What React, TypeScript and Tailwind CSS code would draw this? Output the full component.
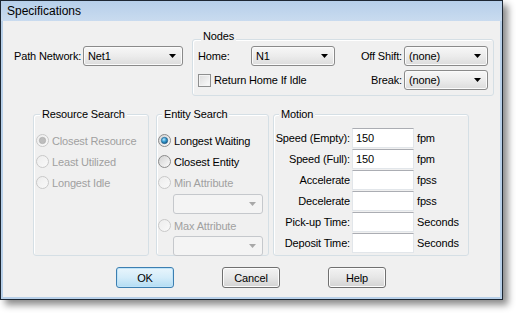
import React from "react";

const font = { fontFamily: '"Liberation Sans", Arial, sans-serif' };

function Arrow({ disabled }: { disabled?: boolean }) {
  return (
    <svg width="7" height="4" viewBox="0 0 7 4" className="ml-auto mr-[6px] shrink-0">
      <path d="M0 0 H7 L3.5 4 Z" fill={disabled ? "#a8a8a8" : "#000"} />
    </svg>
  );
}

function Combo({ text, w, disabled }: { text?: string; w: string; disabled?: boolean }) {
  return (
    <div
      className={
        w +
        " h-[20px] shrink-0 rounded-[3px] border flex items-center pl-[4px] " +
        (disabled
          ? "border-[#c5c8cc] bg-[#f4f4f4]"
          : "border-[#8a8a8a] bg-gradient-to-b from-[#f7f7f7] via-[#ececec] to-[#dcdcdc] shadow-[inset_0_0_0_1px_#fbfbfb]")
      }
    >
      <span className="text-black">{text}</span>
      <Arrow disabled={disabled} />
    </div>
  );
}

function Radio({ state, id }: { state: "blue" | "gray" | "off" | "dis"; id: string }) {
  const dis = state === "dis" || state === "gray";
  return (
    <svg width="13" height="13" viewBox="0 0 13 13" className="shrink-0">
      <defs>
        <linearGradient id={id + "f"} x1="0" y1="0" x2="1" y2="1">
          <stop offset="0" stopColor={dis ? "#ececec" : "#d0d0d0"} />
          <stop offset="1" stopColor={dis ? "#fafafa" : "#fdfdfd"} />
        </linearGradient>
        <radialGradient id={id + "d"} cx="0.4" cy="0.35" r="0.7">
          <stop offset="0" stopColor="#bfe6fb" />
          <stop offset="0.45" stopColor="#3aa0d4" />
          <stop offset="1" stopColor="#0d4f7c" />
        </radialGradient>
      </defs>
      <circle cx="6.5" cy="6.5" r="6" fill={`url(#${id}f)`} stroke={dis ? "#c8c8c8" : "#8b8b8b"} />
      {state === "blue" && <circle cx="6.5" cy="6.5" r="3.2" fill={`url(#${id}d)`} stroke="#1e5d8a" strokeWidth="0.6" />}
      {state === "gray" && <circle cx="6.5" cy="6.5" r="3.2" fill="#bdbdbd" stroke="#a9a9a9" strokeWidth="0.6" />}
    </svg>
  );
}

function RadioRow({ label, state, id, className = "" }: { label: string; state: "blue" | "gray" | "off" | "dis"; id: string; className?: string }) {
  const dis = state === "dis" || state === "gray";
  return (
    <div className={"flex items-center h-[21px] " + className}>
      <Radio state={state} id={id} />
      <span className={"ml-[3px] " + (dis ? "text-[#a0a0a0]" : "text-black")}>{label}</span>
    </div>
  );
}

function Group({ title, className, legend, children }: { title: string; className: string; legend: string; children?: React.ReactNode }) {
  return (
    <div className={"relative rounded-[3px] border border-[#d5dfe5] shadow-[inset_1px_1px_0_#fff] " + className}>
      <span className={"absolute px-[2px] bg-[#f0f0f0] leading-[14px] text-black " + legend}>{title}</span>
      {children}
    </div>
  );
}

function TextBox({ value }: { value?: string }) {
  return (
    <div className="w-[62px] h-[20px] shrink-0 bg-white border border-[#e2e6ea] border-t-[#abadb3] pl-[3px] flex items-center">
      {value}
    </div>
  );
}

function MotionRow({ label, value, unit }: { label: string; value?: string; unit: string }) {
  return (
    <div className="flex items-center h-[20px]">
      <span className="w-[77px] shrink-0 text-right pr-[2px] text-black">{label}</span>
      <TextBox value={value} />
      <span className="ml-[3px] text-black">{unit}</span>
    </div>
  );
}

function Button({ label, def }: { label: string; def?: boolean }) {
  return (
    <div
      className={
        "w-[58px] h-[21px] rounded-[3px] border flex items-center justify-center text-black " +
        (def
          ? "border-[#3c7fb1] bg-gradient-to-b from-[#e8f5fc] via-[#d4ecf9] to-[#b3dcf3] shadow-[inset_0_0_0_1px_#bfe3f8]"
          : "border-[#707070] bg-gradient-to-b from-[#f3f3f3] via-[#e6e6e6] to-[#d3d3d3] shadow-[inset_0_0_0_1px_#fcfcfc]")
      }
    >
      {label}
    </div>
  );
}

export default function App() {
  return (
    <div className="w-[517px] h-[316px] bg-white text-[11px] leading-[14px] whitespace-nowrap tracking-[-0.15px]" style={font}>
      <div className="w-[503px] h-[300px] border border-[#1d2733] bg-[#b8d0e9] shadow-[5px_5px_7px_rgba(0,0,0,0.45)] flex flex-col">
        <div className="h-[20px] shrink-0 bg-gradient-to-b from-[#b6cfea] to-[#c9dbef] flex items-center pl-[6px]">
          <span className="text-[12px] text-black tracking-normal">Specifications</span>
        </div>
        <div className="flex-1 mx-[2px] mb-[2px] bg-[#f0f0f0] flex flex-col">
          {/* Row 1 */}
          <div className="flex items-start mt-[18px] pl-[11px]">
            <div className="flex items-center mt-[7px]">
              <span className="w-[69px] text-black">Path Network:</span>
              <Combo text="Net1" w="w-[100px]" />
            </div>
            <Group title="Nodes" legend="left-[8px] -top-[11px]" className="ml-[9px] w-[302px] h-[57px] pt-[6px] px-[5px]">
              <div className="flex items-center">
                <span className="w-[53px] text-black">Home:</span>
                <Combo text="N1" w="w-[84px]" />
                <span className="ml-auto mr-[2px] text-black">Off Shift:</span>
                <Combo text="(none)" w="w-[84px]" />
              </div>
              <div className="flex items-center mt-[4px]">
                <div className="w-[13px] h-[13px] border border-[#8e8f8f] bg-gradient-to-br from-[#dcdcdc] to-[#fbfbfb] shadow-[inset_0_0_0_1px_#f4f4f4]" />
                <span className="ml-[3px] text-black">Return Home If Idle</span>
                <span className="ml-auto mr-[2px] text-black">Break:</span>
                <Combo text="(none)" w="w-[84px]" />
              </div>
            </Group>
          </div>
          {/* Row 2 */}
          <div className="flex mt-[18px] pl-[30px]">
            <Group title="Resource Search" legend="left-[6px] -top-[8px]" className="w-[116px] h-[142px] pt-[15px] pl-[2px]">
              <RadioRow label="Closest Resource" state="gray" id="r1" />
              <RadioRow label="Least Utilized" state="dis" id="r2" />
              <RadioRow label="Longest Idle" state="dis" id="r3" />
            </Group>
            <Group title="Entity Search" legend="left-[5px] -top-[8px]" className="ml-[7px] w-[113px] h-[142px] pt-[15px] pl-[1px]">
              <RadioRow label="Longest Waiting" state="blue" id="e1" />
              <RadioRow label="Closest Entity" state="off" id="e2" />
              <RadioRow label="Min Attribute" state="dis" id="e3" />
              <div className="pl-[15px] mt-[1px]">
                <Combo w="w-[90px]" disabled />
              </div>
              <RadioRow label="Max Attribute" state="dis" id="e4" className="mt-[1px]" />
              <div className="pl-[15px]">
                <Combo w="w-[90px]" disabled />
              </div>
            </Group>
            <Group title="Motion" legend="left-[5px] -top-[8px]" className="ml-[4px] w-[196px] h-[142px] pt-[13px] pl-[1px] flex flex-col gap-[1px]">
              <MotionRow label="Speed (Empty):" value="150" unit="fpm" />
              <MotionRow label="Speed (Full):" value="150" unit="fpm" />
              <MotionRow label="Accelerate" unit="fpss" />
              <MotionRow label="Decelerate" unit="fpss" />
              <MotionRow label="Pick-up Time:" unit="Seconds" />
              <MotionRow label="Deposit Time:" unit="Seconds" />
            </Group>
          </div>
          {/* Buttons */}
          <div className="flex mt-[11px] pl-[113px] gap-[48px]">
            <Button label="OK" def />
            <Button label="Cancel" />
            <Button label="Help" />
          </div>
        </div>
      </div>
    </div>
  );
}
